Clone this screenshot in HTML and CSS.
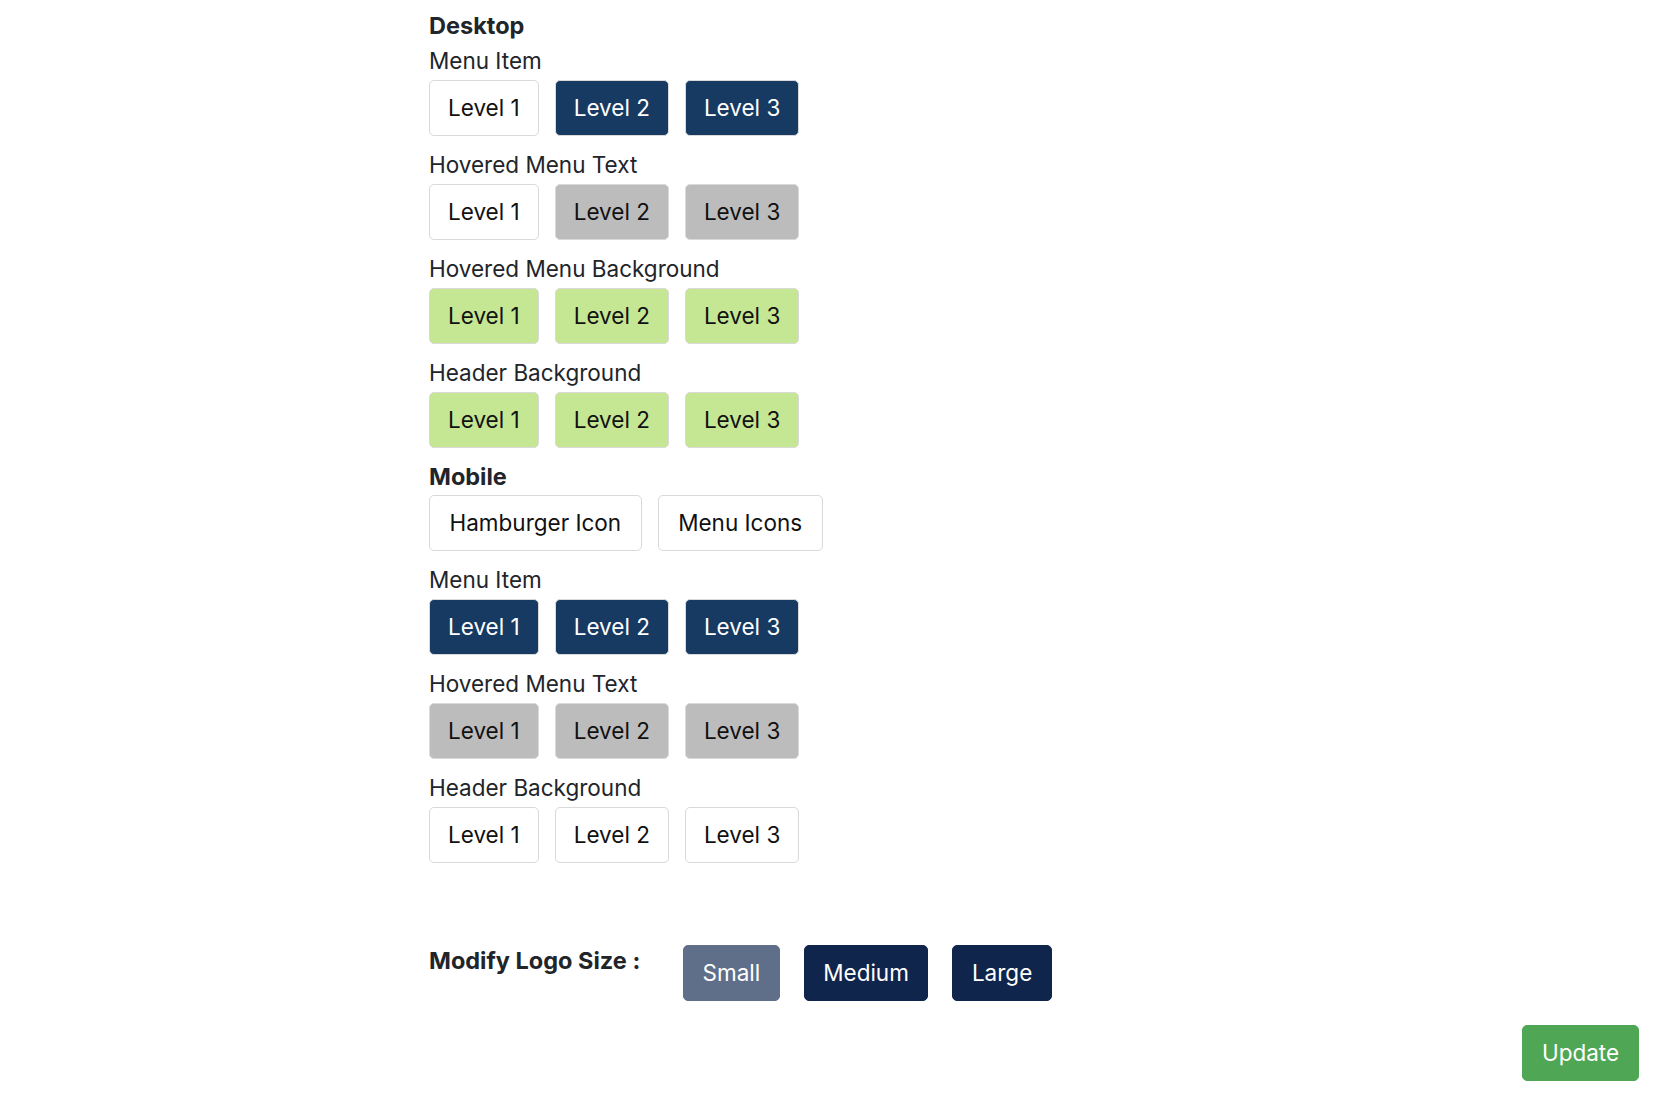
FILE: index.html
```html
<!DOCTYPE html>
<html lang="en">
<head>
<meta charset="utf-8">
<title>Menu Colors</title>
<link rel="stylesheet" href="styles.css">
</head>
<body>
<div class="page">
  <div class="panel">
    <div class="heading">Desktop</div>
    <div class="field">
      <div class="label">Menu Item</div>
      <div class="btn-row">
        <button class="btn btn-white">Level 1</button>
        <button class="btn btn-navy">Level 2</button>
        <button class="btn btn-navy">Level 3</button>
      </div>
    </div>
    <div class="field">
      <div class="label">Hovered Menu Text</div>
      <div class="btn-row">
        <button class="btn btn-white">Level 1</button>
        <button class="btn btn-gray">Level 2</button>
        <button class="btn btn-gray">Level 3</button>
      </div>
    </div>
    <div class="field">
      <div class="label">Hovered Menu Background</div>
      <div class="btn-row">
        <button class="btn btn-green">Level 1</button>
        <button class="btn btn-green">Level 2</button>
        <button class="btn btn-green">Level 3</button>
      </div>
    </div>
    <div class="field">
      <div class="label">Header Background</div>
      <div class="btn-row">
        <button class="btn btn-green">Level 1</button>
        <button class="btn btn-green">Level 2</button>
        <button class="btn btn-green">Level 3</button>
      </div>
    </div>

    <div class="heading heading-tight">Mobile</div>
    <div class="field">
      <div class="btn-row">
        <button class="btn btn-white btn-wide">Hamburger Icon</button>
        <button class="btn btn-white btn-wide">Menu Icons</button>
      </div>
    </div>
    <div class="field">
      <div class="label">Menu Item</div>
      <div class="btn-row">
        <button class="btn btn-navy">Level 1</button>
        <button class="btn btn-navy">Level 2</button>
        <button class="btn btn-navy">Level 3</button>
      </div>
    </div>
    <div class="field">
      <div class="label">Hovered Menu Text</div>
      <div class="btn-row">
        <button class="btn btn-gray">Level 1</button>
        <button class="btn btn-gray">Level 2</button>
        <button class="btn btn-gray">Level 3</button>
      </div>
    </div>
    <div class="field">
      <div class="label">Header Background</div>
      <div class="btn-row">
        <button class="btn btn-white">Level 1</button>
        <button class="btn btn-white">Level 2</button>
        <button class="btn btn-white">Level 3</button>
      </div>
    </div>

    <div class="logo-row">
      <div class="logo-label">Modify Logo Size :</div>
      <div class="logo-buttons">
        <button class="btn size-btn size-active">Small</button>
        <button class="btn size-btn">Medium</button>
        <button class="btn size-btn">Large</button>
      </div>
    </div>
  </div>
  <div class="update-row">
    <button class="btn btn-update">Update</button>
  </div>
</div>
</body>
</html>
```

FILE: styles.css
```css
* {
  box-sizing: border-box;
}

html, body {
  margin: 0;
  padding: 0;
  background: #ffffff;
}

body {
  font-family: Inter, "Liberation Sans", Arial, sans-serif;
  font-size: 22.5px;
  color: #212529;
}

.page {
  padding: 13px 41px 0 0;
}

.panel {
  margin-left: 429px;
}

.heading {
  font-size: 23.5px;
  font-weight: 700;
  line-height: 26px;
  margin-bottom: 9px;
}

.heading-tight {
  margin-bottom: 5px;
}

.field {
  margin-bottom: 16px;
}

.label {
  line-height: 26px;
  margin-bottom: 6px;
}

.btn-row {
  display: flex;
  gap: 16px;
}

.btn {
  font-family: inherit;
  font-size: 22.5px;
  height: 56px;
  padding: 0 18px;
  border: 1px solid #d9d9d9;
  border-radius: 5px;
  line-height: 1;
  cursor: pointer;
}

.btn-wide {
  padding: 0 19.5px;
}

.btn-white {
  background: #ffffff;
  color: #111111;
}

.btn-navy {
  background: #173a62;
  color: #ffffff;
}

.btn-gray {
  background: #bcbcbc;
  color: #111111;
}

.btn-green {
  background: #c5e793;
  color: #111111;
}

.logo-row {
  display: flex;
  margin-top: 82px;
}

.logo-label {
  width: 254px;
  flex-shrink: 0;
  font-size: 23.5px;
  font-weight: 700;
  line-height: 26px;
  padding-top: 3px;
}

.logo-buttons {
  display: flex;
  gap: 24px;
}

.size-btn {
  background: #10254b;
  color: #ffffff;
  border-color: #10254b;
  padding: 0 18.5px;
}

.size-active {
  background: #5f6f8a;
  border-color: #5f6f8a;
}

.update-row {
  display: flex;
  justify-content: flex-end;
  margin-top: 24px;
}

.btn-update {
  background: #4fa654;
  border-color: #4fa654;
  color: #ffffff;
  width: 117px;
  padding: 0;
}
```
